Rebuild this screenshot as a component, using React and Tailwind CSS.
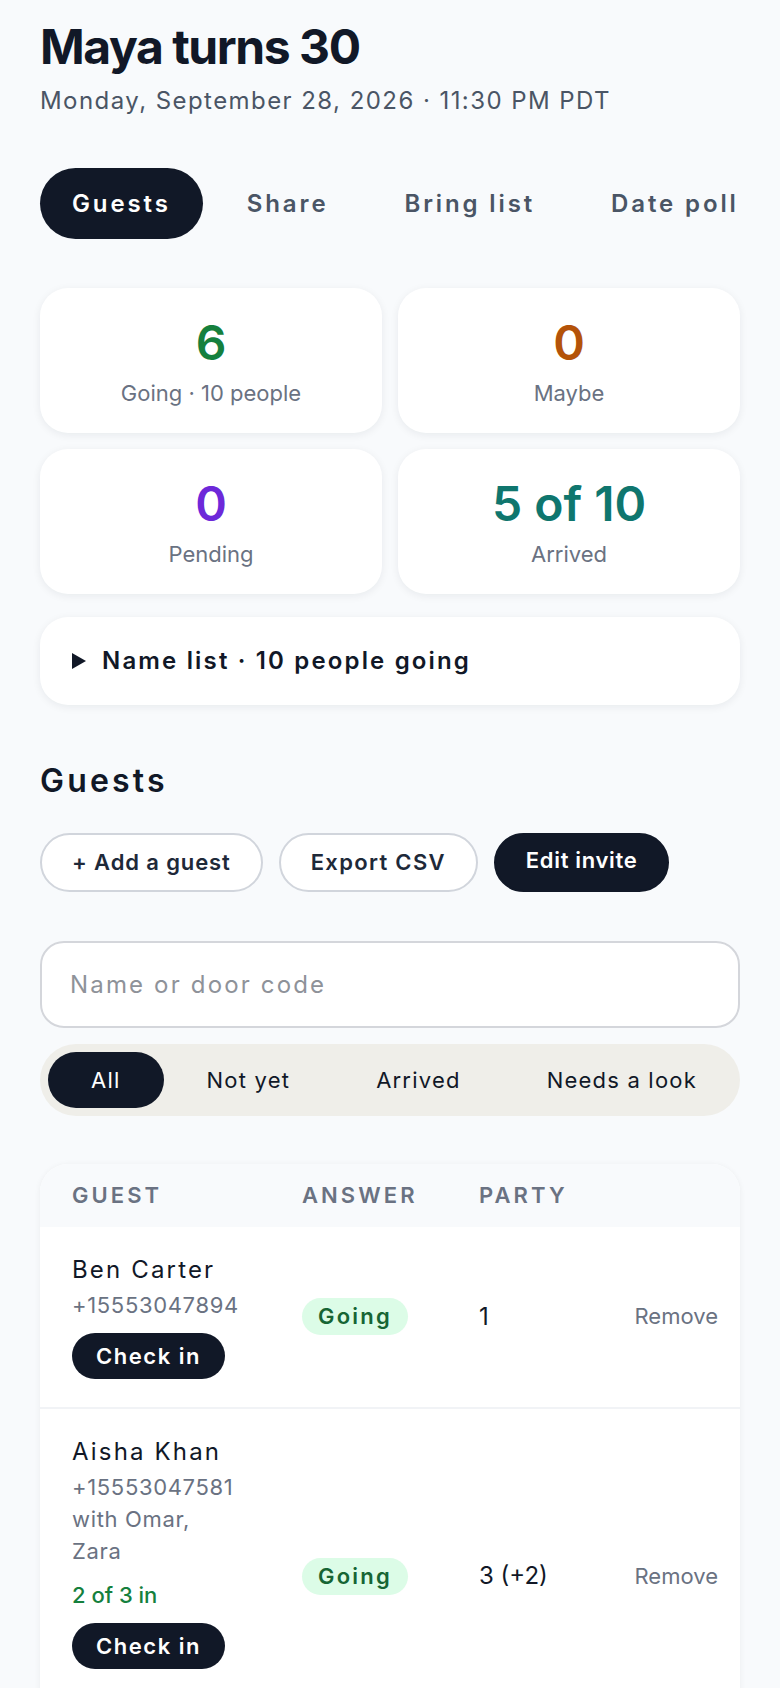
import {useState} from "react";

const tabs = ["Guests", "Share", "Bring list", "Date poll"];
const filters = ["All", "Not yet", "Arrived", "Needs a look"];

const guests = [
  {name: "Ben Carter", phone: "+15553047894", party: "1"},
  {name: "Aisha Khan", phone: "+15553047581", withText: "with Omar, Zara", inCount: "2 of 3 in", party: "3 (+2)"},
];

const Stat = ({value, label, color}) => (
  <div className="rounded-[28px] bg-white pt-[31px] pb-[26px] text-center shadow-[0_2px_8px_rgba(15,23,42,0.07)]">
    <div className={`text-5xl leading-none font-semibold ${color}`}>{value}</div>
    <div className="mt-3 text-[22px] leading-7 text-gray-500">{label}</div>
  </div>
);

const GuestRow = ({guest, last}) => (
  <div
    className={`grid grid-cols-[230px_177px_1fr_auto] items-center pl-8 pr-[22px] pt-[27px] pb-[28px] ${last ? "" : "border-b-2 border-[#f1f3f6]"}`}>
    <div className={guest.inCount ? "pb-[47px]" : ""}>
      <div className="text-2xl leading-8 tracking-[0.09em] text-[#111827]">{guest.name}</div>
      <div className="mt-[3px] w-[168px] text-[22px] leading-8 tracking-[0.03em] text-gray-500">
        <div>{guest.phone}</div>
        {guest.withText && <div>{guest.withText}</div>}
      </div>
      {guest.inCount && (
        <div className="mt-3 text-[22px] leading-8 font-medium text-[#15803d]">{guest.inCount}</div>
      )}
      <button className="mt-3 flex h-[46px] items-center rounded-full bg-[#111827] px-6 text-[22px] font-semibold tracking-[0.07em] text-white">
        Check in
      </button>
    </div>
    <div>
      <span className="inline-flex h-[37px] items-center rounded-full bg-[#dcfce7] px-4 text-[22px] font-semibold tracking-[0.1em] text-[#166534]">
        Going
      </span>
    </div>
    <div className="text-2xl text-[#111827]">{guest.party}</div>
    <button className="text-[22px] text-gray-500">Remove</button>
  </div>
);

export default function App() {
  const [tab, setTab] = useState("Guests");
  const [filter, setFilter] = useState("All");
  const [query, setQuery] = useState("");

  return (
    <div className="min-h-screen bg-[#f8fafc] px-10 pt-5 pb-16 font-['Inter','Noto_Sans',sans-serif] text-[#111827]">
      <h1 className="text-5xl leading-[53px] font-bold tracking-[-0.03em]">Maya turns 30</h1>
      <p className="mt-3 text-2xl leading-8 tracking-[0.06em] text-gray-600">Monday, September 28, 2026 · 11:30 PM PDT</p>

      <nav className="mt-[51px] flex gap-3 whitespace-nowrap">
        {tabs.map((t) => (
          <button
            key={t}
            onClick={() => setTab(t)}
            className={`flex h-[71px] items-center rounded-full px-8 text-2xl font-semibold tracking-[0.12em] ${tab === t ? "bg-[#111827] text-white" : "text-gray-600"}`}>
            {t}
          </button>
        ))}
      </nav>

      <div className="mt-[49px] grid grid-cols-2 gap-x-4 gap-y-4">
        <Stat value="6" label="Going · 10 people" color="text-[#15803d]"/>
        <Stat value="0" label="Maybe" color="text-[#b45309]"/>
        <Stat value="0" label="Pending" color="text-[#6d28d9]"/>
        <Stat value="5 of 10" label="Arrived" color="text-[#0f766e]"/>
      </div>

      <div className="mt-[23px] flex h-[88px] items-center gap-4 rounded-[28px] bg-white px-8 shadow-[0_2px_8px_rgba(15,23,42,0.07)]">
        <svg width="14" height="16" viewBox="0 0 14 16" className="shrink-0">
          <polygon points="0,0 14,8 0,16" fill="#111827"/>
        </svg>
        <span className="text-2xl font-semibold tracking-[0.09em]">Name list · 10 people going</span>
      </div>

      <h2 className="mt-[56px] text-[32px] leading-10 font-semibold tracking-[0.1em]">Guests</h2>

      <div className="mt-8 flex gap-4">
        <button className="h-[59px] rounded-full border-2 border-gray-300 bg-white px-[30px] text-[22px] font-semibold tracking-[0.04em] text-gray-800">
          + Add a guest
        </button>
        <button className="h-[59px] rounded-full border-2 border-gray-300 bg-white px-[30px] text-[22px] font-semibold tracking-[0.06em] text-gray-800">
          Export CSV
        </button>
        <button className="h-[59px] rounded-full border-2 border-[#111827] bg-[#111827] px-[30px] pb-1 text-[22px] font-semibold tracking-[0.03em] text-white">
          Edit invite
        </button>
      </div>

      <input
        value={query}
        onChange={(e) => setQuery(e.target.value)}
        placeholder="Name or door code"
        className="mt-[49px] block h-[87px] w-full rounded-3xl border-2 border-[#d4d6db] bg-white px-7 text-2xl tracking-[0.09em] outline-none placeholder:text-[#8e9299]"/>

      <div className="mt-4 flex h-[72px] rounded-full bg-[#efeee9] py-2 pl-2">
        {filters.map((f) => (
          <button
            key={f}
            onClick={() => setFilter(f)}
            className={`flex flex-auto items-center justify-center rounded-full text-[22px] tracking-[0.055em] ${filter === f ? "bg-[#111827] text-white" : "text-[#111827]"}`}>
            {f}
          </button>
        ))}
      </div>

      <div className="mt-12 overflow-hidden rounded-[28px] bg-white shadow-[0_1px_6px_rgba(15,23,42,0.06)]">
        <div className="grid h-[63px] grid-cols-[230px_177px_1fr_auto] items-center bg-[#f8fafc] pl-8 pr-[22px] text-[22px] font-semibold tracking-[0.14em] text-gray-500 uppercase">
          <div>Guest</div>
          <div>Answer</div>
          <div>Party</div>
          <div/>
        </div>
        {guests.map((g, i) => (
          <GuestRow key={g.name} guest={g} last={i === guests.length - 1}/>
        ))}
      </div>
    </div>
  );
}
